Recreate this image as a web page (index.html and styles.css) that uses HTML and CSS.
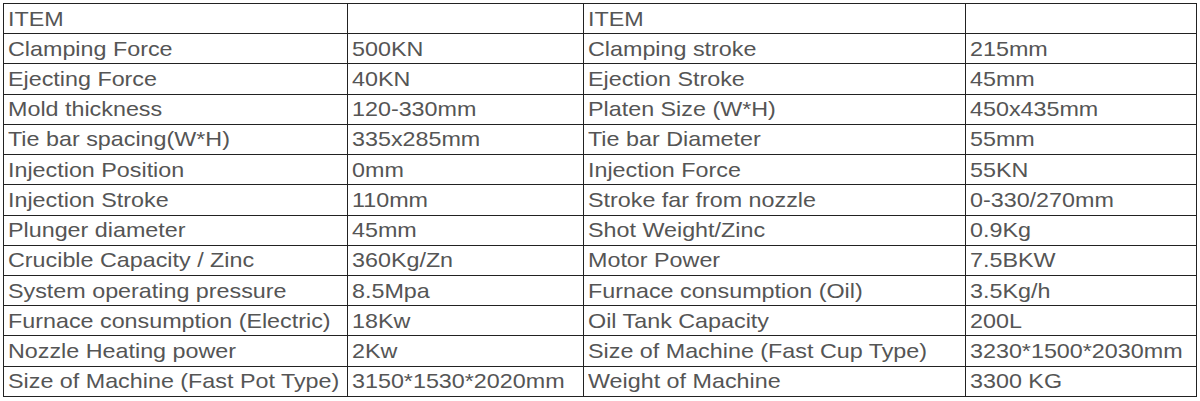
FILE: index.html
```html
<!DOCTYPE html>
<html>
<head>
<meta charset="utf-8">
<link rel="stylesheet" href="styles.css">
</head>
<body>
<table class="spec">
<colgroup>
<col class="c1"><col class="c2"><col class="c3"><col class="c4">
</colgroup>
<tbody>
<tr><td><span class="t">ITEM</span></td><td></td><td><span class="t">ITEM</span></td><td></td></tr>
<tr><td><span class="t">Clamping Force</span></td><td><span class="t">500KN</span></td><td><span class="t">Clamping stroke</span></td><td><span class="t">215mm</span></td></tr>
<tr><td><span class="t">Ejecting Force</span></td><td><span class="t">40KN</span></td><td><span class="t">Ejection Stroke</span></td><td><span class="t">45mm</span></td></tr>
<tr><td><span class="t">Mold thickness</span></td><td><span class="t">120-330mm</span></td><td><span class="t">Platen Size (W*H)</span></td><td><span class="t">450x435mm</span></td></tr>
<tr><td><span class="t">Tie bar spacing(W*H)</span></td><td><span class="t">335x285mm</span></td><td><span class="t">Tie bar Diameter</span></td><td><span class="t">55mm</span></td></tr>
<tr><td><span class="t">Injection Position</span></td><td><span class="t">0mm</span></td><td><span class="t">Injection Force</span></td><td><span class="t">55KN</span></td></tr>
<tr><td><span class="t">Injection Stroke</span></td><td><span class="t">110mm</span></td><td><span class="t">Stroke far from nozzle</span></td><td><span class="t">0-330/270mm</span></td></tr>
<tr><td><span class="t">Plunger diameter</span></td><td><span class="t">45mm</span></td><td><span class="t">Shot Weight/Zinc</span></td><td><span class="t">0.9Kg</span></td></tr>
<tr><td><span class="t">Crucible Capacity / Zinc</span></td><td><span class="t">360Kg/Zn</span></td><td><span class="t">Motor Power</span></td><td><span class="t">7.5BKW</span></td></tr>
<tr><td><span class="t">System operating pressure</span></td><td><span class="t">8.5Mpa</span></td><td><span class="t">Furnace consumption (Oil)</span></td><td><span class="t">3.5Kg/h</span></td></tr>
<tr><td><span class="t">Furnace consumption (Electric)</span></td><td><span class="t">18Kw</span></td><td><span class="t">Oil Tank Capacity</span></td><td><span class="t">200L</span></td></tr>
<tr><td><span class="t">Nozzle Heating power</span></td><td><span class="t">2Kw</span></td><td><span class="t">Size of Machine (Fast Cup Type)</span></td><td><span class="t">3230*1500*2030mm</span></td></tr>
<tr><td><span class="t">Size of Machine (Fast Pot Type)</span></td><td><span class="t">3150*1530*2020mm</span></td><td><span class="t">Weight of Machine</span></td><td><span class="t">3300 KG</span></td></tr>
</tbody>
</table>
</body>
</html>
```
FILE: styles.css
```css
html, body {
  margin: 0;
  background: #ffffff;
}
body {
  padding: 3px 0 0 3px;
}
.spec {
  border-collapse: collapse;
  table-layout: fixed;
  width: 1193px;
  height: 394px;
  font-family: "Liberation Sans", Arial, sans-serif;
  font-size: 21px;
  color: #555555;
  border: 1px solid #111111;
}
.c1 { width: 344px; }
.c2 { width: 236px; }
.c3 { width: 382px; }
.c4 { width: 231px; }
.spec td {
  border: 1px solid #222222;
  padding: 0 0 0 4px;
  height: 28px;
  line-height: 22px;
  vertical-align: middle;
  white-space: nowrap;
  overflow: hidden;
}
.t {
  display: inline-block;
  transform: scaleX(1.11);
  transform-origin: 0 50%;
}
```
